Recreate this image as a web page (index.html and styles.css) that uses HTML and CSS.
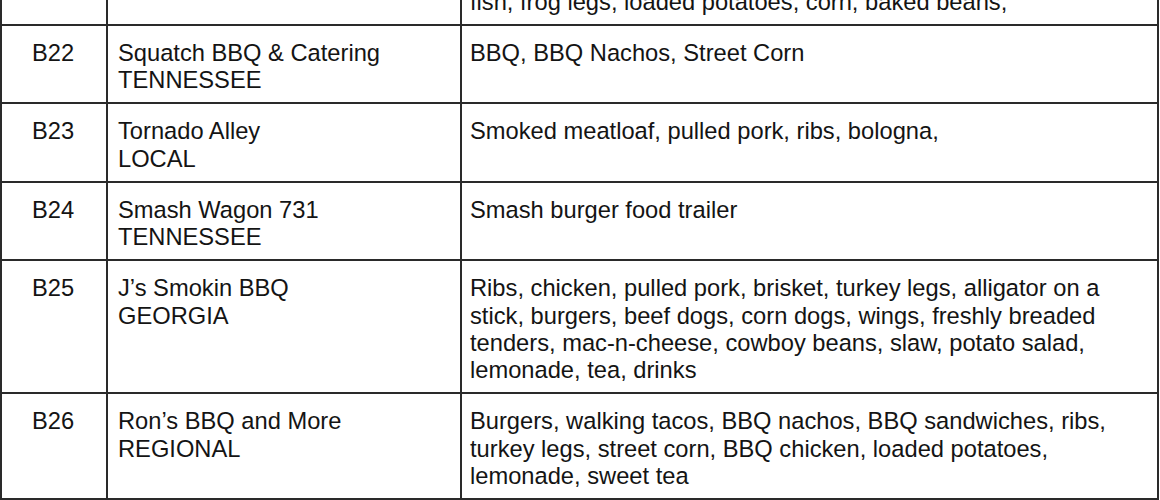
FILE: index.html
```html
<!DOCTYPE html>
<html>
<head>
<meta charset="utf-8">
<link rel="stylesheet" href="styles.css">
</head>
<body>
<table class="vendors">
  <colgroup>
    <col class="c-id">
    <col class="c-name">
    <col class="c-menu">
  </colgroup>
  <tbody>
    <tr class="partial">
      <td class="id"></td>
      <td class="name"></td>
      <td class="menu">fish, frog legs, loaded potatoes, corn, baked beans,</td>
    </tr>
    <tr>
      <td class="id">B22</td>
      <td class="name">Squatch BBQ &amp; Catering<br>TENNESSEE</td>
      <td class="menu">BBQ, BBQ Nachos, Street Corn</td>
    </tr>
    <tr>
      <td class="id">B23</td>
      <td class="name">Tornado Alley<br>LOCAL</td>
      <td class="menu">Smoked meatloaf, pulled pork, ribs, bologna,</td>
    </tr>
    <tr>
      <td class="id">B24</td>
      <td class="name">Smash Wagon 731<br>TENNESSEE</td>
      <td class="menu">Smash burger food trailer</td>
    </tr>
    <tr>
      <td class="id">B25</td>
      <td class="name">J’s Smokin BBQ<br>GEORGIA</td>
      <td class="menu">Ribs, chicken, pulled pork, brisket, turkey legs, alligator on a stick, burgers, beef dogs, corn dogs, wings, freshly breaded tenders, mac-n-cheese, cowboy beans, slaw, potato salad, lemonade, tea, drinks</td>
    </tr>
    <tr>
      <td class="id">B26</td>
      <td class="name">Ron’s BBQ and More<br>REGIONAL</td>
      <td class="menu">Burgers, walking tacos, BBQ nachos, BBQ sandwiches, ribs, turkey legs, street corn, BBQ chicken, loaded potatoes, lemonade, sweet tea</td>
    </tr>
  </tbody>
</table>
</body>
</html>
```

FILE: styles.css
```css
html, body {
  margin: 0;
  padding: 0;
  background: #ffffff;
  overflow: hidden;
}

.vendors {
  width: 1159px;
  margin-top: -27.5px;
  border-collapse: collapse;
  table-layout: fixed;
  font-family: "Liberation Sans", Arial, sans-serif;
  font-size: 23.7px;
  line-height: 27.25px;
  color: #141414;
}

.c-id { width: 106px; }
.c-name { width: 354px; }

.vendors td {
  border: 2px solid #2a2a2a;
  padding: 14px 10px 8px 8px;
  vertical-align: top;
}

.vendors td.id {
  text-align: center;
}

.vendors td.name {
  padding-left: 10px;
}
```
